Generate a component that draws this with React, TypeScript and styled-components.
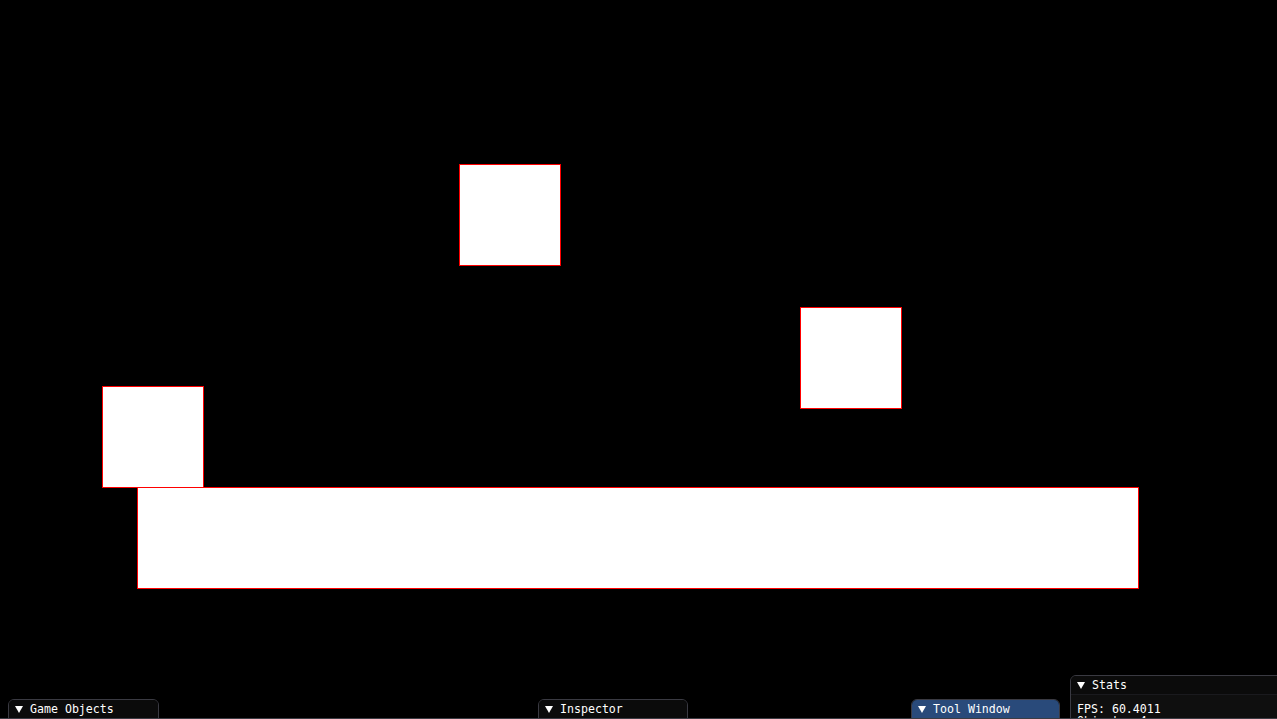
import React from "react";
import styled, { createGlobalStyle } from "styled-components";

const Global = createGlobalStyle`
  html, body { margin: 0; padding: 0; background: #000; overflow: hidden; }
  #root { width: 1277px; height: 719px; }
`;

const Screen = styled.div`
  width: 1277px;
  height: 719px;
  display: flex;
  flex-direction: column;
  background: #000;
  font-family: "DejaVu Sans Mono", "Liberation Mono", monospace;
`;

const Scene = styled.div`
  position: relative;
  flex: 1;
  overflow: hidden;
`;

const BottomEdge = styled.div`
  height: 1px;
  background: #3c3c44;
`;

const Block = styled.div<{ $x: number; $y: number; $w: number; $h: number }>`
  position: absolute;
  left: ${(p) => p.$x}px;
  top: ${(p) => p.$y}px;
  width: ${(p) => p.$w}px;
  height: ${(p) => p.$h}px;
  box-sizing: border-box;
  background: #fff;
  border: 1px solid #ff0000;
`;

const Window = styled.div<{ $x: number; $y: number; $w: number; $active?: boolean }>`
  position: absolute;
  left: ${(p) => p.$x}px;
  top: ${(p) => p.$y}px;
  width: ${(p) => p.$w}px;
  box-sizing: border-box;
  border: 1px solid #3a3a42;
  border-radius: 6px 6px 0 0;
  background: ${(p) => (p.$active ? "#294a7a" : "#0b0b0b")};
  overflow: hidden;
`;

const TitleBar = styled.div<{ $active?: boolean }>`
  height: 18px;
  display: flex;
  align-items: center;
  gap: 7px;
  padding-left: 6px;
  background: ${(p) => (p.$active ? "#294a7a" : "#0b0b0b")};
  color: #fff;
  font-size: 11.6px;
  line-height: 18px;
  white-space: nowrap;
`;

const Body = styled.div`
  background: #0f0f0f;
  border-top: 1px solid #1a1a1e;
  padding: 8px 6px 0;
  height: 40px;
  color: #fff;
  font-size: 11.6px;
  line-height: 12px;
  white-space: nowrap;
`;

const Arrow = () => (
  <svg width="8" height="7" viewBox="0 0 8 7" style={{ display: "block", marginTop: "1px" }}>
    <polygon points="0,0 8,0 4,7" fill="#fff" />
  </svg>
);

const Title = ({ label, active }: { label: string; active?: boolean }) => (
  <TitleBar $active={active}>
    <Arrow />
    <span>{label}</span>
  </TitleBar>
);

export default function App() {
  return (
    <Screen>
      <Global />
      <Scene>
        <Block $x={459} $y={164} $w={102} $h={102} />
        <Block $x={800} $y={307} $w={102} $h={102} />
        <Block $x={102} $y={386} $w={102} $h={102} />
        <Block $x={137} $y={487} $w={1002} $h={102} />

        <Window $x={8} $y={699} $w={151}>
          <Title label="Game Objects" />
        </Window>
        <Window $x={538} $y={699} $w={150}>
          <Title label="Inspector" />
        </Window>
        <Window $x={911} $y={699} $w={149} $active>
          <Title label="Tool Window" active />
        </Window>
        <Window $x={1070} $y={675} $w={230}>
          <Title label="Stats" />
          <Body>
            <div>FPS: 60.4011</div>
            <div>Objects: 4</div>
          </Body>
        </Window>
      </Scene>
      <BottomEdge />
    </Screen>
  );
}
